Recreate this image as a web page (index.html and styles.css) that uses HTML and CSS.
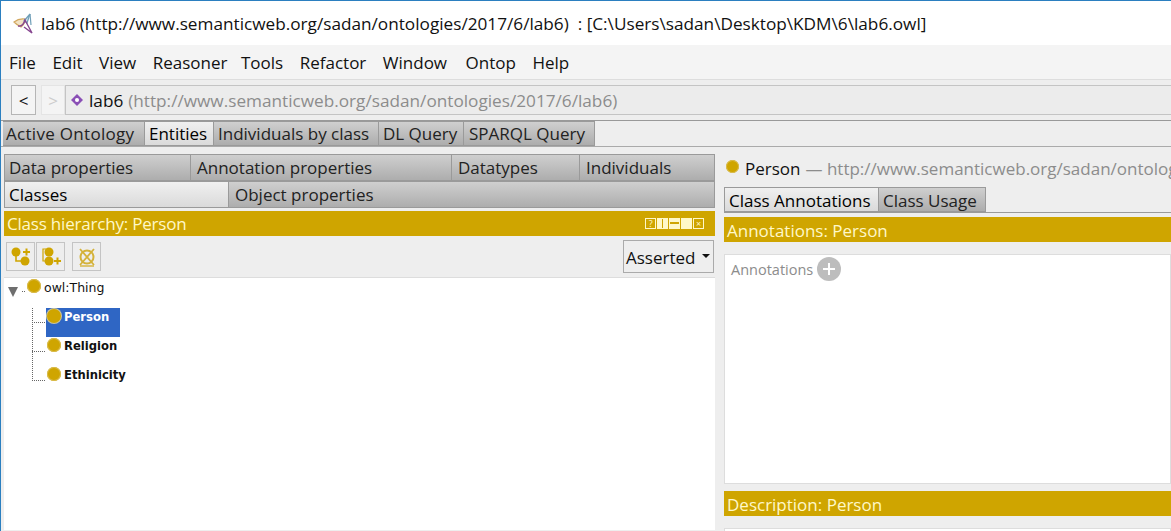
FILE: index.html
```html
<!DOCTYPE html>
<html lang="en">
<head>
    <title>lab6</title>
    <link rel="stylesheet" href="styles.css">
</head>
<body>
    <div class="titlebar">
        <svg class="logo" width="22" height="22" viewBox="0 0 22 22">
            <path d="M1 9 Q6 5 12 6 Q12 11 8 14 Q4 12 1 9 Z" fill="#f3e3c4" stroke="#d2a860" stroke-width="1.2"/>
            <path d="M17 1 L11 8 L14 10 Z" fill="#d5e6ee" stroke="#6f9fb8" stroke-width="1.2"/>
            <path d="M17 1 L18 12" fill="none" stroke="#6f9fb8" stroke-width="1.2"/>
            <path d="M5 13 Q10 14 12 7 L19 20 L11 14" fill="none" stroke="#86458f" stroke-width="1.4"/>
        </svg>
        <span>lab6 (http://www.semanticweb.org/sadan/ontologies/2017/6/lab6)  : [C:\Users\sadan\Desktop\KDM\6\lab6.owl]</span>
    </div>
    <div class="menubar">
        <span>File</span><span>Edit</span><span>View</span><span>Reasoner</span><span class="m-tools">Tools</span><span>Refactor</span><span>Window</span><span class="m-ontop">Ontop</span><span>Help</span>
    </div>
    <div class="navbar">
        <div class="navbtn">&lt;</div>
        <div class="navbtn off">&gt;</div>
        <div class="address">
            <svg width="14" height="14" viewBox="0 0 14 14">
                <path d="M7 1 L13 7 L7 13 L1 7 Z" fill="#8a4fb5"/>
                <circle cx="7" cy="7" r="2" fill="#fff"/>
            </svg>
            <span>lab6</span> <span class="muted">(http://www.semanticweb.org/sadan/ontologies/2017/6/lab6)</span>
        </div>
    </div>
    <div class="tabs maintabs">
        <div class="tab w-active">Active Ontology</div>
        <div class="tab on w-entities">Entities</div>
        <div class="tab w-indiv">Individuals by class</div>
        <div class="tab w-dl">DL Query</div>
        <div class="tab w-sparql">SPARQL Query</div>
    </div>
    <div class="workspace">
        <div class="leftpane">
            <div class="subtabs">
                <div class="tab c1">Data properties</div>
                <div class="tab c2">Annotation properties</div>
                <div class="tab c3">Datatypes</div>
                <div class="tab c4">Individuals</div>
            </div>
            <div class="subtabs second">
                <div class="tab on c5">Classes</div>
                <div class="tab c6">Object properties</div>
            </div>
            <div class="viewhead hier">
                <span>Class hierarchy: Person</span>
                <div class="viewbtns">
                    <i>?</i><i class="split"></i><i class="min"></i><i class="max"></i><i>×</i>
                </div>
            </div>
            <div class="tools">
                <div class="toolbtn">
                    <svg width="24" height="24" viewBox="0 0 24 24">
                        <circle cx="7" cy="7" r="4.5" fill="#cfa500"/>
                        <circle cx="16" cy="16" r="4.5" fill="#cfa500"/>
                        <path d="M7 10 V16 H12" fill="none" stroke="#cfa500" stroke-width="1.6"/>
                        <path d="M14 7 H21 M17.5 3.5 V10.5" stroke="#cfa500" stroke-width="2"/>
                    </svg>
                </div>
                <div class="toolbtn">
                    <svg width="24" height="24" viewBox="0 0 24 24">
                        <circle cx="10" cy="7" r="4.5" fill="#cfa500"/>
                        <circle cx="10" cy="16" r="4.5" fill="#cfa500"/>
                        <path d="M7 4 H4 V16 H7" fill="none" stroke="#cfa500" stroke-width="1.2"/>
                        <path d="M15 16 H22 M18.5 12.5 V19.5" stroke="#cfa500" stroke-width="2"/>
                    </svg>
                </div>
                <div class="toolbtn gap">
                    <svg width="24" height="24" viewBox="0 0 24 24">
                        <circle cx="12" cy="12" r="6.5" fill="none" stroke="#d4b23a" stroke-width="2"/>
                        <path d="M5 4 L19 20 M19 4 L5 20" stroke="#d4b23a" stroke-width="1.8"/>
                        <path d="M5 21 H19" stroke="#d4b23a" stroke-width="1.4"/>
                    </svg>
                </div>
                <div class="combo">Asserted <b></b></div>
            </div>
            <div class="tree">
                <div class="node root">
                    <span class="arrow"></span><span class="dots"></span><span class="dot"></span><span class="rootlabel">owl:Thing</span>
                </div>
                <div class="branch">
                    <div class="node kid sel"><span class="dot"></span><span>Person</span></div>
                    <div class="node kid"><span class="dot"></span><span>Religion</span></div>
                    <div class="node kid"><span class="dot"></span><span>Ethinicity</span></div>
                </div>
            </div>
        </div>
        <div class="rightpane">
            <div class="entity">
                <span class="dot big"></span><span>Person</span>
                <span class="muted">— http://www.semanticweb.org/sadan/ontologies/2017/6/lab6#Person</span>
            </div>
            <div class="tabs classtabs">
                <div class="tab on ca">Class Annotations</div>
                <div class="tab cu">Class Usage</div>
            </div>
            <div class="viewhead wide"><span>Annotations: Person</span></div>
            <div class="panel">
                <div class="annot">
                    <span>Annotations</span>
                    <span class="plus"></span>
                </div>
            </div>
            <div class="viewhead wide desc"><span>Description: Person</span></div>
            <div class="panel last"></div>
        </div>
    </div>
</body>
</html>
```

FILE: styles.css
```css
* {
    box-sizing: border-box;
}

html, body {
    margin: 0;
    height: 100%;
}

body {
    width: 1171px;
    height: 531px;
    overflow: hidden;
    background-color: #eeeeee;
    color: #111;
    font-family: "Open Sans", "Noto Sans", sans-serif;
    font-size: 17px;
    border-top: 1px solid #2b7fc0;
    border-left: 1px solid #2b7fc0;
}

.muted {
    color: #8c8c8c;
}

.titlebar {
    height: 44px;
    background-color: #fff;
    display: flex;
    align-items: center;
    gap: 6px;
    padding-left: 12px;
    font-size: 17.2px;
    white-space: pre;
}

.logo {
    margin-top: 1px;
}

.menubar {
    height: 35px;
    background-color: #f4f4f4;
    border-bottom: 1px solid #ddd;
    display: flex;
    align-items: center;
    gap: 16.5px;
    padding-left: 8px;
}

.m-tools {
    margin-left: -3px;
}

.m-ontop {
    margin-left: 2px;
}

.navbar {
    height: 40px;
    display: flex;
    align-items: center;
    padding-left: 10px;
    gap: 6px;
    background-color: #eee;
}

.navbtn {
    width: 25px;
    height: 30px;
    border: 1px solid #b5b5b5;
    background-color: #f4f4f4;
    display: flex;
    align-items: center;
    justify-content: center;
}

.navbtn.off {
    width: 24px;
    margin-left: -1px;
    color: #ccc;
    border-color: #e4e4e4;
    margin-right: -6px;
}

.address {
    flex: 1;
    height: 30px;
    border: 1px solid #c4c4c4;
    background-color: #ececec;
    display: flex;
    align-items: center;
    gap: 5px;
    padding-left: 4px;
    margin-right: -2px;
    font-size: 17.2px;
}

.tabs {
    display: flex;
}

.tab {
    height: 100%;
    padding-left: 5px;
    background: linear-gradient(#cfcfcf, #adadad);
    border: 1px solid #9a9a9a;
    border-left: 0;
    display: flex;
    align-items: center;
    white-space: nowrap;
    color: #222;
}

.tab.on {
    background: linear-gradient(#f0f0f0, #dadada);
    color: #000;
}

.maintabs {
    height: 27px;
    border-top: 1px solid #999;
    border-bottom: 1px solid #aaa;
    padding-left: 2px;
}

.w-active {
    width: 142px;
    padding-left: 3px;
    letter-spacing: .3px;
}

.w-entities { width: 69px; padding-left: 4px; }
.w-indiv { width: 165px; padding-left: 4px; }
.w-dl { width: 85px; padding-left: 4px; }
.w-sparql { width: 131px; }

.workspace {
    display: flex;
    height: 384px;
}

.leftpane {
    width: 719px;
    padding: 7px 5px 0 3px;
}

.subtabs {
    display: flex;
    height: 27px;
}

.subtabs .tab {
    padding-left: 6px;
}

.subtabs .c1, .subtabs .c5 {
    padding-left: 4px;
}

.c1 { width: 187px; border-left: 1px solid #9a9a9a; }
.c2 { width: 261px; }
.c3 { width: 128px; }
.c4 { width: 135px; }
.c5 { width: 225px; border-left: 1px solid #9a9a9a; }
.c6 { width: 486px; }

.viewhead {
    height: 25px;
    background-color: #cfa500;
    color: #fff8c8;
    display: flex;
    align-items: center;
    justify-content: space-between;
    padding-left: 3px;
    margin-top: 3px;
}

.hier {
    letter-spacing: -.2px;
}

.viewbtns {
    display: flex;
    gap: 1px;
    padding-right: 11px;
}

.viewbtns i {
    width: 11px;
    height: 11px;
    border: 1px solid #fff8c8;
    color: #fff8c8;
    font-size: 9px;
    font-style: normal;
    line-height: 9px;
    text-align: center;
}

.viewbtns .split {
    background: linear-gradient(to right, #fff8c8 40%, #cfa500 40%, #cfa500 60%, #fff8c8 60%);
}

.viewbtns .min {
    background: linear-gradient(#fff8c8 35%, #cfa500 35%, #cfa500 60%, #fff8c8 60%);
}

.viewbtns .max {
    background-color: #fff8c8;
}

.tools {
    height: 41px;
    display: flex;
    align-items: center;
    gap: 1px;
    padding-left: 2px;
}

.toolbtn {
    width: 29px;
    height: 29px;
    border: 1px solid #c4c4c4;
    display: flex;
    align-items: center;
    justify-content: center;
}

.toolbtn.gap {
    margin-left: 6px;
}

.combo {
    margin-left: auto;
    margin-right: 1px;
    width: 91px;
    height: 33px;
    border: 1px solid #aaa;
    display: flex;
    align-items: center;
    justify-content: space-between;
    padding: 2px 3px 0 2px;
}

.combo b {
    border-left: 4px solid transparent;
    border-right: 4px solid transparent;
    border-top: 4px solid #111;
    margin-top: -3px;
}

.tree {
    height: 253px;
    background-color: #fff;
    border-top: 1px solid #ddd;
    font-family: "DejaVu Sans", sans-serif;
    font-size: 11.6px;
    position: relative;
}

.dot {
    width: 14px;
    height: 14px;
    border-radius: 50%;
    background-color: #cfa500;
    box-shadow: inset 0 0 0 1px #d9bc50;
    flex-shrink: 0;
}

.node {
    display: flex;
    align-items: center;
    gap: 3px;
}

.root {
    height: 19px;
    padding-left: 4px;
}

.rootlabel {
    font-size: 12.5px;
}

.arrow {
    border-left: 5px solid transparent;
    border-right: 5px solid transparent;
    border-top: 10px solid #6e6e6e;
    margin-top: 8px;
}

.dots {
    width: 3px;
    border-top: 1px dotted #666;
    margin-top: 7px;
    margin-left: 1px;
}

.root .dot {
    margin: -4px 0 0 -1px;
}

.branch {
    margin: 0 0 0 42px;
    padding-top: 11px;
    font-weight: bold;
    position: relative;
}

.branch::before {
    content: "";
    position: absolute;
    left: -14px;
    top: 11px;
    height: 73px;
    width: 1px;
    border-left: 1px dotted #666;
}

.kid {
    height: 29px;
    width: 74px;
    align-items: flex-start;
    padding-left: 1px;
    gap: 3px;
    position: relative;
}

.kid span:last-child {
    margin-top: 2px;
}

.kid::before {
    content: "";
    position: absolute;
    left: -14px;
    top: 14px;
    width: 13px;
    border-top: 1px dotted #666;
}

.kid .dot {
    margin-top: 1px;
}

.sel {
    background-color: #2f66c4;
    color: #fff;
}

.sel .dot {
    box-shadow: 0 0 0 1px #c8c4a0;
}

.rightpane {
    flex: 1;
    padding-top: 7px;
    overflow: hidden;
    white-space: nowrap;
}

.entity {
    height: 29px;
    display: flex;
    align-items: center;
    gap: 5px;
    padding-left: 5px;
}

.dot.big {
    width: 13px;
    height: 13px;
    margin: -4px 1px 0 1px;
}

.classtabs {
    height: 26px;
    margin: 4px 0 0 4px;
    border-bottom: 1px solid #9a9a9a;
}

.classtabs .tab {
    padding-top: 2px;
    padding-left: 4px;
}

.ca { width: 155px; border-left: 1px solid #9a9a9a; }
.cu { width: 107px; }

.viewhead.wide {
    margin: 4px 0 0 4px;
    padding-top: 2px;
}

.viewhead.desc {
    margin-top: 7px;
}

.panel {
    height: 230px;
    margin: 12px 0 0 4px;
    border: 1px solid #ddd;
    background-color: #fff;
}

.panel.last {
    height: 30px;
}

.annot {
    display: flex;
    align-items: center;
    gap: 4px;
    padding: 2px 0 0 6px;
    color: #8c8c8c;
    font-size: 14.5px;
}

.plus {
    width: 24px;
    height: 24px;
    border-radius: 50%;
    background:
        linear-gradient(#fff, #fff) center / 12px 2px no-repeat,
        linear-gradient(#fff, #fff) center / 2px 12px no-repeat,
        #bdbdbd;
}
```
